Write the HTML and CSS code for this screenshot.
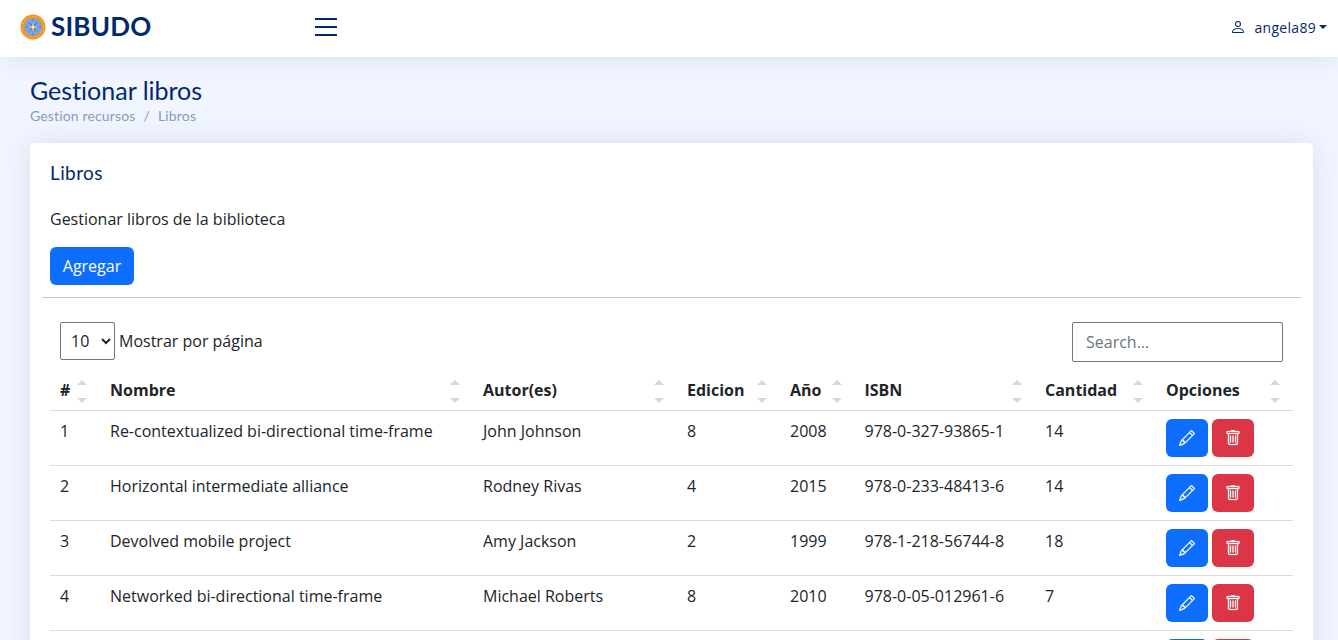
FILE: index.html
```html
<!DOCTYPE html>
<html>
  <head>
    <title>SIBUDO</title>
    <link rel="stylesheet" href="styles.css">
  </head>
  <body>
    <header class="topbar">
      <div class="brand">
        <svg class="brand-logo" viewBox="0 0 26 26" width="26" height="26">
          <circle cx="13" cy="13" r="12.5" fill="#f7901a"/>
          <circle cx="13" cy="13" r="10.5" fill="none" stroke="#fbb81f" stroke-width="1.4" stroke-dasharray="1.5 1.5"/>
          <circle cx="13" cy="13" r="9" fill="#76a2f2"/>
          <path d="M8.5 8.5l5 4.5-4.5 4.5M17.5 8.5l-5 4.5 4.5 4.5" fill="none" stroke="#4a4a4a" stroke-width=".6"/>
          <path d="M13 5l1 7 7 1-7 1-1 7-1-7-7-1 7-1z" fill="#f7f2c0" stroke="#4a4a4a" stroke-width=".35"/>
        </svg>
        <span class="brand-name">SIBUDO</span>
      </div>
      <button class="menu-toggle" type="button" aria-label="menu">
        <span></span><span></span><span></span>
      </button>
      <div class="user">
        <svg viewBox="0 0 16 16" width="16" height="16" fill="currentColor">
          <path d="M8 8a3 3 0 1 0 0-6 3 3 0 0 0 0 6zm2-3a2 2 0 1 1-4 0 2 2 0 0 1 4 0zm4 8c0 1-1 1-1 1H3s-1 0-1-1 1-4 6-4 6 3 6 4zm-1-.004c-.001-.246-.154-.986-.832-1.664C11.516 10.68 10.289 10 8 10s-3.516.68-4.168 1.332c-.678.678-.83 1.418-.832 1.664h10z"/>
        </svg>
        <span class="user-name">angela89</span>
        <span class="caret"></span>
      </div>
    </header>

    <main class="page">
      <div class="page-head">
        <h1>Gestionar libros</h1>
        <div class="crumbs">
          <span>Gestion recursos</span><span class="crumb-sep">/</span><span>Libros</span>
        </div>
      </div>

      <section class="card">
        <h2 class="card-title">Libros</h2>
        <p class="card-text">Gestionar libros de la biblioteca</p>
        <button class="btn btn-add" type="button">Agregar</button>
        <hr class="divider">

        <div class="table-tools">
          <div class="per-page">
            <select class="per-page-select">
              <option>10</option>
            </select>
            <label>Mostrar por página</label>
          </div>
          <input class="search" type="text" placeholder="Search...">
        </div>

        <table class="books">
          <colgroup>
            <col class="c-num"><col class="c-name"><col class="c-author"><col class="c-ed">
            <col class="c-year"><col class="c-isbn"><col class="c-qty"><col class="c-opt">
          </colgroup>
          <thead>
            <tr>
              <th class="sort">#</th>
              <th class="sort">Nombre</th>
              <th class="sort">Autor(es)</th>
              <th class="sort">Edicion</th>
              <th class="sort">Año</th>
              <th class="sort">ISBN</th>
              <th class="sort">Cantidad</th>
              <th class="sort">Opciones</th>
            </tr>
          </thead>
          <tbody id="rows"></tbody>
        </table>
      </section>
    </main>

    <script>
      // filas de la tabla
      var libros = [
        [1, "Re-contextualized bi-directional time-frame", "John Johnson", 8, 2008, "978-0-327-93865-1", 14],
        [2, "Horizontal intermediate alliance", "Rodney Rivas", 4, 2015, "978-0-233-48413-6", 14],
        [3, "Devolved mobile project", "Amy Jackson", 2, 1999, "978-1-218-56744-8", 18],
        [4, "Networked bi-directional time-frame", "Michael Roberts", 8, 2010, "978-0-05-012961-6", 7],
        ["", "", "", "", "", "", ""]
      ];

      var lapiz = '<svg viewBox="0 0 16 16" width="16" height="16" fill="currentColor"><path d="M12.146.146a.5.5 0 0 1 .708 0l3 3a.5.5 0 0 1 0 .708l-10 10a.5.5 0 0 1-.168.11l-5 2a.5.5 0 0 1-.65-.65l2-5a.5.5 0 0 1 .11-.168l10-10zM11.207 2.5 13.5 4.793 14.793 3.5 12.5 1.207 11.207 2.5zm1.586 3L10.5 3.207 4 9.707V10h.5a.5.5 0 0 1 .5.5v.5h.5a.5.5 0 0 1 .5.5v.5h.293l6.5-6.5zm-9.761 5.175-.106.106-1.528 3.821 3.821-1.528.106-.106A.5.5 0 0 1 5 12.5V12h-.5a.5.5 0 0 1-.5-.5V11h-.5a.5.5 0 0 1-.468-.325z"/></svg>';
      var papelera = '<svg viewBox="0 0 16 16" width="16" height="16" fill="currentColor"><path d="M5.5 5.5A.5.5 0 0 1 6 6v6a.5.5 0 0 1-1 0V6a.5.5 0 0 1 .5-.5zm2.5 0a.5.5 0 0 1 .5.5v6a.5.5 0 0 1-1 0V6a.5.5 0 0 1 .5-.5zm3 .5a.5.5 0 0 0-1 0v6a.5.5 0 0 0 1 0V6z"/><path fill-rule="evenodd" d="M14.5 3a1 1 0 0 1-1 1H13v9a2 2 0 0 1-2 2H5a2 2 0 0 1-2-2V4h-.5a1 1 0 0 1-1-1V2a1 1 0 0 1 1-1H6a1 1 0 0 1 1-1h2a1 1 0 0 1 1 1h3.5a1 1 0 0 1 1 1v1zM4.118 4 4 4.059V13a1 1 0 0 0 1 1h6a1 1 0 0 0 1-1V4.059L11.882 4H4.118zM2.5 3V2h11v1h-11z"/></svg>';

      var tbody = document.getElementById("rows");
      libros.forEach(function (fila) {
        var tr = document.createElement("tr");
        fila.forEach(function (valor) {
          var td = document.createElement("td");
          td.textContent = valor;
          tr.appendChild(td);
        });
        var opciones = document.createElement("td");
        opciones.innerHTML = '<div class="row-actions"><button class="btn btn-icon btn-edit" type="button">' + lapiz +
          '</button><button class="btn btn-icon btn-del" type="button">' + papelera + '</button></div>';
        tr.appendChild(opciones);
        tbody.appendChild(tr);
      });
    </script>
  </body>
</html>
```

FILE: styles.css
```css
html, body {
    margin: 0;
    padding: 0;
    height: 640px;
    overflow: hidden;
}

body {
    background: #f1f5ff;
    color: #212529;
    font-family: "Open Sans", "Noto Sans", sans-serif;
    font-size: 16px;
}

.topbar {
    box-sizing: border-box;
    height: 57px;
    background: #fff;
    box-shadow: 0 0 28px rgba(1, 41, 112, 0.1);
    display: flex;
    align-items: center;
    padding: 0 11px 3px 20px;
    position: relative;
}

.brand {
    width: 295px;
    display: flex;
    align-items: center;
    gap: 5px;
}

.brand-logo {
    display: block;
}

.brand-name {
    font-family: "Lato", sans-serif;
    font-size: 26px;
    font-weight: 700;
    line-height: 30px;
    padding-bottom: 2px;
    letter-spacing: .2px;
    color: #012970;
}

.menu-toggle {
    width: 22px;
    height: 18px;
    padding: 0;
    border: 0;
    background: none;
    display: flex;
    flex-direction: column;
    justify-content: space-between;
}

.menu-toggle span {
    display: block;
    height: 2px;
    background: #012970;
}

.user {
    margin-left: auto;
    display: flex;
    align-items: center;
    color: #012970;
    font-size: 14px;
}

.user-name {
    margin-left: 8px;
    font-weight: 500;
    letter-spacing: .3px;
}

.caret {
    margin-left: 3px;
    border-top: 4px solid #012970;
    border-left: 4px solid transparent;
    border-right: 4px solid transparent;
}

.page {
    padding: 20px 25px 0 30px;
}

.page-head {
    margin-bottom: 19px;
}

h1 {
    margin: 0;
    font-family: "Lato", sans-serif;
    font-size: 25px;
    font-weight: 400;
    font-variant-ligatures: none;
    line-height: 27px;
    color: #012970;
}

.crumbs {
    margin-top: 4px;
    font-family: "Lato", sans-serif;
    font-size: 14px;
    font-variant-ligatures: none;
    letter-spacing: .15px;
    line-height: 16px;
    color: #899bbd;
}

.crumb-sep {
    margin: 0 8px;
}

.card {
    background: #fff;
    border-radius: 5px;
    box-shadow: 0 0 30px rgba(1, 41, 112, 0.1);
    padding: 20px 12px 0;
}

.card-title {
    margin: 0 8px;
    font-family: "Lato", sans-serif;
    font-size: 19px;
    font-weight: 400;
    letter-spacing: .4px;
    line-height: 19px;
    color: #012970;
}

.card-text {
    margin: 25px 8px 0;
    font-size: 16px;
    line-height: 24px;
}

.btn {
    border: 0;
    border-radius: 6px;
    color: #fff;
    font-family: inherit;
    font-size: 16px;
    cursor: pointer;
}

.btn-add {
    display: block;
    margin: 16px 8px 0;
    width: 84px;
    height: 38px;
    background: #0d6efd;
}

.divider {
    margin: 12px 0 0;
    border: 0;
    border-top: 1px solid #c8c8c8;
}

.table-tools {
    display: flex;
    justify-content: space-between;
    align-items: flex-start;
    padding: 24px 18px 0;
}

.per-page {
    display: flex;
    align-items: center;
    gap: 4px;
}

.per-page-select {
    width: 55px;
    height: 38px;
    padding: 0 0 0 6px;
    background: #fff;
    border: 1px solid #767676;
    border-radius: 2px;
    color: #212529;
    font-family: inherit;
    font-size: 16px;
}

.search {
    box-sizing: border-box;
    width: 211px;
    height: 40px;
    padding: 0 13px;
    border: 1px solid #767676;
    border-radius: 2px;
    font-family: inherit;
    font-size: 16px;
}

.search::placeholder {
    color: #6c757d;
}

.books {
    box-sizing: border-box;
    width: 1243px;
    margin: 8px 8px 0;
    table-layout: fixed;
    border-collapse: collapse;
}

.c-num { width: 50px; }
.c-name { width: 373px; }
.c-author { width: 204px; }
.c-ed { width: 103px; }
.c-year { width: 74.5px; }
.c-isbn { width: 180.5px; }
.c-qty { width: 121px; }
.c-opt { width: 137px; }

.books th {
    height: 40px;
    padding: 0 10px;
    box-sizing: border-box;
    text-align: left;
    font-weight: 700;
    border-bottom: 1px solid #dcdcdc;
    position: relative;
}

/* flechas de orden */
.sort::before, .sort::after {
    content: "";
    position: absolute;
    right: 13px;
    border-left: 5px solid transparent;
    border-right: 5px solid transparent;
}

.sort::before {
    top: 10px;
    border-bottom: 5px solid #d8d8d8;
}

.sort::after {
    bottom: 7px;
    border-top: 5px solid #d8d8d8;
}

.books td {
    height: 55px;
    box-sizing: border-box;
    padding: 8px 10px;
    vertical-align: top;
    line-height: 24px;
    border-bottom: 1px solid #dcdcdc;
}

.row-actions {
    display: flex;
    gap: 4px;
}

.btn-icon {
    width: 42px;
    height: 38px;
    padding: 0;
    display: flex;
    align-items: center;
    justify-content: center;
}

.btn-icon svg {
    stroke: currentColor;
    stroke-width: .3;
}

.btn-edit {
    background: #0d6efd;
}

.btn-del {
    background: #dc3545;
}
```
